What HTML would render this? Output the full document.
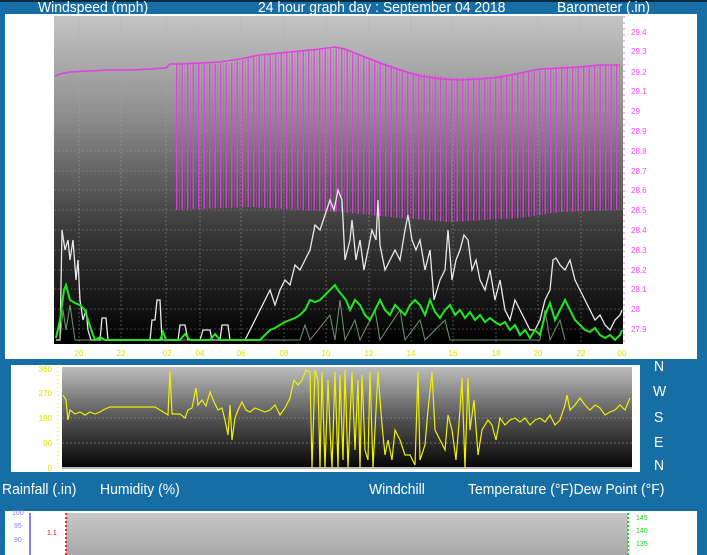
<!DOCTYPE html>
<html><head><meta charset="utf-8"><style>
body{margin:0;width:707px;height:555px;background:#166ea5;overflow:hidden;font-family:"Liberation Sans",sans-serif;position:relative}
.t{position:absolute;color:#fff;font-size:15px;white-space:nowrap;transform:scaleX(0.93);transform-origin:left}
.top{position:absolute;left:0;top:0;width:707px;height:2px;background:#0a2a3e}
</style></head><body>
<div class="top"></div>
<div class="t" style="left:38px;top:-1px">Windspeed (mph)</div>
<div class="t" style="left:258px;top:-1px">24 hour graph day : September 04 2018</div>
<div class="t" style="left:557px;top:-1px">Barometer (.in)</div>

<svg style="position:absolute;left:0;top:0" width="707" height="555">
<defs>
<linearGradient id="g1" x1="0" y1="0" x2="0" y2="1"><stop offset="0" stop-color="#c4c4c4"/><stop offset="0.3" stop-color="#8e8e8e"/><stop offset="0.65" stop-color="#3a3a3a"/><stop offset="1" stop-color="#000"/></linearGradient>
<linearGradient id="g2" x1="0" y1="0" x2="0" y2="1"><stop offset="0" stop-color="#bdbdbd"/><stop offset="0.5" stop-color="#555"/><stop offset="1" stop-color="#050505"/></linearGradient>
<linearGradient id="g3" x1="0" y1="0" x2="0" y2="1"><stop offset="0" stop-color="#c8c8c8"/><stop offset="1" stop-color="#a8a8a8"/></linearGradient>
<pattern id="mp" width="5.5" height="10" patternUnits="userSpaceOnUse"><rect x="0" y="0" width="1.4" height="10" fill="#e040e0"/><rect x="3" y="0" width="0.8" height="10" fill="#e040e0" opacity="0.6"/></pattern>
</defs>
<rect x="5" y="14" width="692" height="345" fill="#fff"/>
<rect x="54" y="16" width="569" height="328" fill="url(#g1)"/>
<g stroke="#aaa" stroke-width="0.6" stroke-dasharray="2 2" opacity="0.7">
<line x1="54" x2="623" y1="32" y2="32"/><line x1="54" x2="623" y1="51" y2="51"/><line x1="54" x2="623" y1="72" y2="72"/><line x1="54" x2="623" y1="91" y2="91"/><line x1="54" x2="623" y1="111" y2="111"/><line x1="54" x2="623" y1="131" y2="131"/><line x1="54" x2="623" y1="151" y2="151"/><line x1="54" x2="623" y1="171" y2="171"/><line x1="54" x2="623" y1="190" y2="190"/><line x1="54" x2="623" y1="210" y2="210"/><line x1="54" x2="623" y1="230" y2="230"/><line x1="54" x2="623" y1="250" y2="250"/><line x1="54" x2="623" y1="270" y2="270"/><line x1="54" x2="623" y1="289" y2="289"/><line x1="54" x2="623" y1="309" y2="309"/><line x1="54" x2="623" y1="329" y2="329"/>
<line y1="16" y2="344" x1="79" x2="79"/><line y1="16" y2="344" x1="121" x2="121"/><line y1="16" y2="344" x1="166" x2="166"/><line y1="16" y2="344" x1="200" x2="200"/><line y1="16" y2="344" x1="241" x2="241"/><line y1="16" y2="344" x1="284" x2="284"/><line y1="16" y2="344" x1="326" x2="326"/><line y1="16" y2="344" x1="369" x2="369"/><line y1="16" y2="344" x1="411" x2="411"/><line y1="16" y2="344" x1="453" x2="453"/><line y1="16" y2="344" x1="496" x2="496"/><line y1="16" y2="344" x1="538" x2="538"/><line y1="16" y2="344" x1="581" x2="581"/>
</g>
<path d="M176 64 L230 63 L260 56 L300 51 L340 48 L370 58 L410 72 L450 78 L490 77 L530 72 L560 67 L600 65 L622 65 L622 210 L560 212 L520 218 L450 222 L400 218 L340 212 L300 210 L250 207 L176 210Z" fill="url(#mp)" opacity="0.9"/>
<polyline fill="none" stroke="#e040e0" stroke-width="1.6" points="55,76 60,74 70,72 90,71 110,70 130,70 150,69 166,68 170,64 180,64 200,63 220,62 240,59 260,55 280,53 300,51 320,49 335,47 345,49 360,55 380,63 400,70 420,76 440,79 460,80 480,79 500,77 520,73 540,69 560,68 580,67 600,65 620,65"/>
<polyline fill="none" stroke="#e8e8e8" stroke-width="1.3" points="56,340 60,340 62,230 65,250 68,240 70,260 73,240 76,280 78,260 80,300 83,320 86,310 88,330 91,340 100,340 102,318 106,318 108,340 150,340 152,320 155,320 157,300 160,300 162,340 178,340 180,325 185,325 188,340 200,340 203,330 210,330 212,340 220,340 222,325 228,325 230,340 245,340 250,330 255,320 260,310 265,300 270,290 275,305 280,290 285,280 290,285 295,265 300,270 305,260 310,250 315,225 320,230 325,215 330,200 334,210 338,190 342,200 345,260 350,240 352,220 356,260 360,240 364,270 368,250 372,230 376,240 378,200 380,245 385,270 390,260 395,250 400,260 405,230 408,215 412,240 416,250 420,240 425,270 430,250 434,300 440,280 445,270 448,230 452,280 456,260 460,250 464,235 468,240 472,270 476,260 480,280 485,290 490,270 495,300 500,280 505,310 510,320 515,300 520,310 525,320 530,330 535,330 540,320 545,300 550,290 553,260 556,258 560,265 565,270 570,260 575,280 580,290 585,300 590,310 595,320 600,315 605,325 610,330 615,320 620,315 622,310"/>
<polyline fill="none" stroke="#9fcf9f" stroke-width="1" opacity="0.7" points="60,340 63,310 66,330 70,305 75,340 300,340 305,325 310,340 330,315 335,340 340,300 345,340 355,320 360,340 375,310 380,340 400,310 405,340 420,320 425,340 445,320 450,340 540,340 545,310 550,340 560,320 565,340"/>
<polyline fill="none" stroke="#22e622" stroke-width="2" points="56,338 60,320 64,290 66,285 70,300 75,303 80,305 85,310 88,320 92,332 95,340 100,337 105,340 160,340 163,332 166,340 180,340 185,334 190,340 210,340 215,334 220,340 260,340 265,335 270,330 275,328 280,325 285,322 290,320 295,318 300,315 305,310 310,300 315,302 320,300 325,295 330,290 335,285 338,290 342,295 346,300 350,310 355,300 360,305 365,315 370,320 375,310 380,300 385,310 390,315 395,305 400,310 405,315 410,305 415,300 420,305 425,315 430,300 435,312 440,318 445,310 450,305 455,315 460,310 465,318 470,312 475,320 480,315 485,322 490,318 495,322 500,325 505,322 510,330 515,325 520,335 525,330 530,338 535,330 540,335 545,315 550,303 555,320 560,310 565,300 570,310 575,320 580,325 585,330 590,332 595,328 600,335 605,338 610,335 615,340 620,335 622,330"/>
<g fill="#ff40ff" font-size="8">
<text x="631" y="35">29.4</text><text x="631" y="54">29.3</text><text x="631" y="75">29.2</text><text x="631" y="94">29.1</text><text x="631" y="114">29</text><text x="631" y="134">28.9</text><text x="631" y="154">28.8</text><text x="631" y="174">28.7</text><text x="631" y="193">28.6</text><text x="631" y="213">28.5</text><text x="631" y="233">28.4</text><text x="631" y="253">28.3</text><text x="631" y="273">28.2</text><text x="631" y="292">28.1</text><text x="631" y="312">28</text><text x="631" y="332">27.9</text>
</g>
<line x1="624" y1="16" x2="624" y2="344" stroke="#ff60ff" stroke-dasharray="2 4"/>
<g fill="#e0e000" font-size="8" text-anchor="middle">
<text x="79" y="356">20</text><text x="121" y="356">22</text><text x="167" y="356">02</text><text x="200" y="356">04</text><text x="241" y="356">06</text><text x="284" y="356">08</text><text x="326" y="356">10</text><text x="369" y="356">12</text><text x="411" y="356">14</text><text x="453" y="356">16</text><text x="496" y="356">18</text><text x="538" y="356">20</text><text x="581" y="356">22</text><text x="622" y="356">00</text>
</g>
<rect x="11" y="365" width="629" height="107" fill="#fff"/>
<rect x="62" y="367" width="570" height="101" fill="url(#g2)"/>
<line x1="62" y1="468" x2="632" y2="468" stroke="#bbb" stroke-width="2"/>
<g stroke="#aaa" stroke-width="0.5" stroke-dasharray="2 2"><line x1="62" x2="632" y1="392" y2="392"/><line x1="62" x2="632" y1="418" y2="418"/><line x1="62" x2="632" y1="443" y2="443"/></g>
<line x1="58" y1="367" x2="58" y2="468" stroke="#ee0" stroke-dasharray="1 3"/>
<g fill="#e0e000" font-size="8" text-anchor="end">
<text x="52" y="372">360</text><text x="52" y="396">270</text><text x="52" y="421">180</text><text x="52" y="446">90</text><text x="52" y="471">0</text>
</g>
<polyline fill="none" stroke="#f0f000" stroke-width="1.2" points="63,395 66,400 68,420 70,410 75,414 80,412 85,415 90,412 95,414 100,412 105,409 110,407 120,407 130,407 140,407 155,407 160,410 168,415 170,371 172,414 180,414 185,418 188,410 192,408 196,388 198,405 202,400 206,406 210,392 214,402 218,410 222,408 225,420 228,435 230,405 232,440 235,418 238,410 242,402 246,410 250,412 255,408 260,410 265,412 270,410 275,405 280,415 285,408 290,398 294,380 298,385 302,380 306,370 310,372 312,468 315,370 318,380 320,468 322,372 325,468 328,380 330,430 332,468 335,372 338,468 340,375 343,460 345,370 348,468 352,372 355,450 358,380 360,468 362,375 365,450 368,460 370,372 373,468 378,372 382,425 385,455 388,440 392,460 395,430 400,440 405,455 410,455 415,465 418,372 420,460 425,445 428,410 432,372 435,430 440,440 445,450 448,415 452,430 456,460 460,410 462,378 465,468 468,378 470,430 474,400 478,455 482,430 488,420 492,425 496,440 500,418 505,425 510,420 515,418 520,422 525,418 530,425 535,420 540,418 545,422 550,415 555,425 560,420 565,405 567,395 570,410 575,405 580,398 585,405 590,410 595,405 600,408 605,415 610,412 615,410 620,405 625,410 630,398"/>
<rect x="5" y="511" width="692" height="44" fill="#fff"/>
<rect x="66" y="513" width="562" height="42" fill="url(#g3)"/>
<line x1="30" y1="513" x2="30" y2="555" stroke="#8080ff" stroke-width="2"/>
<line x1="66" y1="513" x2="66" y2="555" stroke="#f22" stroke-dasharray="2 2" stroke-width="2"/>
<line x1="628" y1="513" x2="628" y2="555" stroke="#2d2" stroke-dasharray="2 2" stroke-width="2"/>
<g font-size="7"><text x="12" y="515" fill="#8080ff">100</text><text x="14" y="528" fill="#8080ff">95</text><text x="14" y="542" fill="#8080ff">90</text><text x="47" y="535" fill="#e00">1.1</text><text x="636" y="520" fill="#2c2">145</text><text x="636" y="533" fill="#2c2">140</text><text x="636" y="546" fill="#2c2">135</text></g>
</svg>
<div class="t" style="left:654px;top:358px">N</div>
<div class="t" style="left:653px;top:383px">W</div>
<div class="t" style="left:654px;top:409px">S</div>
<div class="t" style="left:654px;top:434px">E</div>
<div class="t" style="left:654px;top:457px">N</div>
<div class="t" style="left:2px;top:481px">Rainfall (.in)</div>
<div class="t" style="left:100px;top:481px">Humidity (%)</div>
<div class="t" style="left:369px;top:481px">Windchill</div>
<div class="t" style="left:468px;top:481px">Temperature (°F)Dew Point (°F)</div>
</body></html>
